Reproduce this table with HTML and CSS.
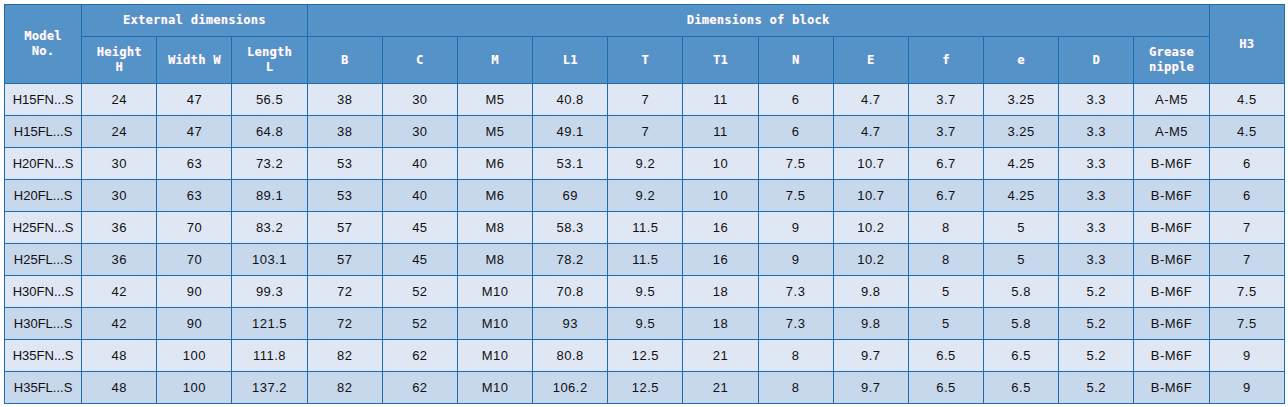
FILE: index.html
```html
<!DOCTYPE html>
<html>
<head>
<meta charset="utf-8">
<link rel="stylesheet" href="styles.css">
</head>
<body>
<table class="spec">
<colgroup>
<col class="c-model">
<col span="16" class="c-std">
</colgroup>
<thead>
<tr class="h1">
<th rowspan="2">Model<br>No.</th>
<th colspan="3">External dimensions</th>
<th colspan="12">Dimensions of block</th>
<th rowspan="2">H3</th>
</tr>
<tr class="h2">
<th>Height<br>H</th>
<th>Width W</th>
<th>Length<br>L</th>
<th>B</th><th>C</th><th>M</th><th>L1</th><th>T</th><th>T1</th><th>N</th><th>E</th><th>f</th><th>e</th><th>D</th>
<th>Grease<br>nipple</th>
</tr>
</thead>
<tbody>
<tr><td class="model">H15FN...S</td><td>24</td><td>47</td><td>56.5</td><td>38</td><td>30</td><td>M5</td><td>40.8</td><td>7</td><td>11</td><td>6</td><td>4.7</td><td>3.7</td><td>3.25</td><td>3.3</td><td>A-M5</td><td>4.5</td></tr>
<tr><td class="model">H15FL...S</td><td>24</td><td>47</td><td>64.8</td><td>38</td><td>30</td><td>M5</td><td>49.1</td><td>7</td><td>11</td><td>6</td><td>4.7</td><td>3.7</td><td>3.25</td><td>3.3</td><td>A-M5</td><td>4.5</td></tr>
<tr><td class="model">H20FN...S</td><td>30</td><td>63</td><td>73.2</td><td>53</td><td>40</td><td>M6</td><td>53.1</td><td>9.2</td><td>10</td><td>7.5</td><td>10.7</td><td>6.7</td><td>4.25</td><td>3.3</td><td>B-M6F</td><td>6</td></tr>
<tr><td class="model">H20FL...S</td><td>30</td><td>63</td><td>89.1</td><td>53</td><td>40</td><td>M6</td><td>69</td><td>9.2</td><td>10</td><td>7.5</td><td>10.7</td><td>6.7</td><td>4.25</td><td>3.3</td><td>B-M6F</td><td>6</td></tr>
<tr><td class="model">H25FN...S</td><td>36</td><td>70</td><td>83.2</td><td>57</td><td>45</td><td>M8</td><td>58.3</td><td>11.5</td><td>16</td><td>9</td><td>10.2</td><td>8</td><td>5</td><td>3.3</td><td>B-M6F</td><td>7</td></tr>
<tr><td class="model">H25FL...S</td><td>36</td><td>70</td><td>103.1</td><td>57</td><td>45</td><td>M8</td><td>78.2</td><td>11.5</td><td>16</td><td>9</td><td>10.2</td><td>8</td><td>5</td><td>3.3</td><td>B-M6F</td><td>7</td></tr>
<tr><td class="model">H30FN...S</td><td>42</td><td>90</td><td>99.3</td><td>72</td><td>52</td><td>M10</td><td>70.8</td><td>9.5</td><td>18</td><td>7.3</td><td>9.8</td><td>5</td><td>5.8</td><td>5.2</td><td>B-M6F</td><td>7.5</td></tr>
<tr><td class="model">H30FL...S</td><td>42</td><td>90</td><td>121.5</td><td>72</td><td>52</td><td>M10</td><td>93</td><td>9.5</td><td>18</td><td>7.3</td><td>9.8</td><td>5</td><td>5.8</td><td>5.2</td><td>B-M6F</td><td>7.5</td></tr>
<tr><td class="model">H35FN...S</td><td>48</td><td>100</td><td>111.8</td><td>82</td><td>62</td><td>M10</td><td>80.8</td><td>12.5</td><td>21</td><td>8</td><td>9.7</td><td>6.5</td><td>6.5</td><td>5.2</td><td>B-M6F</td><td>9</td></tr>
<tr><td class="model">H35FL...S</td><td>48</td><td>100</td><td>137.2</td><td>82</td><td>62</td><td>M10</td><td>106.2</td><td>12.5</td><td>21</td><td>8</td><td>9.7</td><td>6.5</td><td>6.5</td><td>5.2</td><td>B-M6F</td><td>9</td></tr>
</tbody>
</table>
</body>
</html>
```
FILE: styles.css
```css
html, body {
  margin: 0;
  padding: 0;
  background: #ffffff;
}
body {
  padding: 4px;
}
.spec {
  border-collapse: collapse;
  table-layout: fixed;
  width: 1281px;
  font-family: "DejaVu Sans Mono", "Liberation Mono", monospace;
}
.c-model { width: 77px; }
.c-std { width: 75px; }
.spec th, .spec td {
  border: 1px solid #1a6db3;
  text-align: center;
  padding: 0;
}
.spec th {
  background: #5592c8;
  color: #ffffff;
  font-weight: bold;
  font-size: 12px;
  line-height: 15px;
  letter-spacing: 0.3px;
  text-shadow: 0.5px 0 0 rgba(255, 170, 220, 0.6);
}
.h1 th { height: 31px; }
.h2 th { height: 46px; }
.spec td {
  height: 31px;
  font-family: "Liberation Sans", Arial, sans-serif;
  font-size: 13px;
  color: #111111;
  letter-spacing: 0.5px;
}
.spec td.model {
  letter-spacing: 0;
}
.spec tbody tr:nth-child(odd) td { background: #dfe6f4; }
.spec tbody tr:nth-child(even) td { background: #c7d7ec; }
```
